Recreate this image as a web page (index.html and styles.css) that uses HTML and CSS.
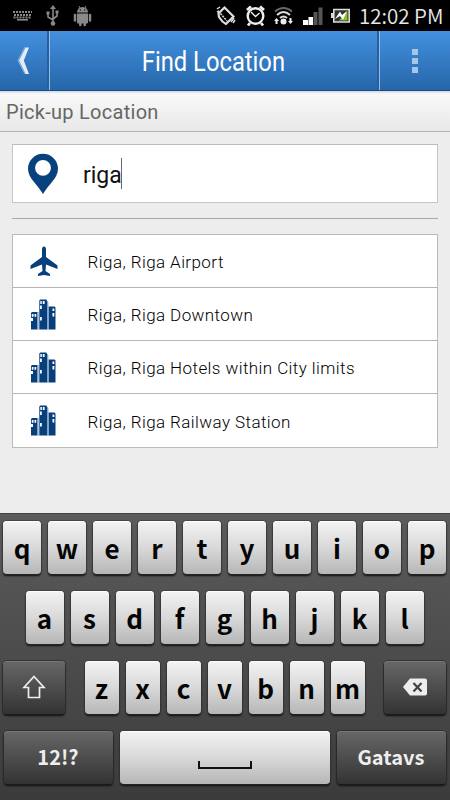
FILE: index.html
```html
<!DOCTYPE html>
<html lang="en">
<head>
<meta charset="utf-8">
<title>Find Location</title>
<link rel="stylesheet" href="styles.css">
</head>
<body>
<svg width="0" height="0" class="defs">
  <symbol id="city" viewBox="0 0 26 31">
    <path fill="#063f7c" d="M1 14l1-1h5.500v17.500H1zM9.300 1.500l1-1h6l1.200 2v28H9.300zM18.500 7.500h6l1 1v22h-7z"/>
    <path fill="#fff" d="M10.300 2h1.500v3h-1.500zM12.800 2h1.800v3h-1.800zM10 6.500h1.800v3.500H10zM10 18h1.800v3.500H10zM1.800 15h1.700v2.700H1.800zM4.500 15h1.700v2.700H4.500zM1 19h2v3H1zM22.500 9.500h1.800V12h-1.800zM22.500 14h1.800v3.500h-1.800z"/>
    <path stroke="#8caac8" stroke-width=".8" d="M8.400 13v18M18 3v28"/>
  </symbol>
</svg>
<div class="status">
  <svg class="status-left" width="96" height="31" viewBox="0 0 96 31">
    <g fill="none" stroke="#898989" stroke-width="2" stroke-dasharray="2 1"><path d="M13 12h19M14 15h17M13.500 17.500h18"/></g>
    <path fill="#898989" d="M17 19h11v1.600H17z"/>
    <g fill="none" stroke="#898989" stroke-width="1.600"><path d="M53 8v15M48 14v3l5 3M57 12v4l-4 3"/></g>
    <path fill="#898989" d="M53 5l3 4h-6zM46.500 11.500h3v3h-3zM55.500 10.500h3v3h-3z"/><circle cx="53" cy="23.500" r="2.300" fill="#898989"/>
    <path fill="#898989" d="M77 12.500a5.500 5.500 0 0 1 11 0zM77 13.500h11v9a1 1 0 0 1-1 1H78a1 1 0 0 1-1-1z"/>
    <path stroke="#898989" stroke-width="2.500" stroke-linecap="round" d="M75 15v5.500M90 15v5.500M80.300 22v3M84.700 22v3"/>
    <path stroke="#898989" d="M79 6l1.500 3M86 6l-1.500 3"/><circle cx="80.300" cy="10" r=".7"/><circle cx="84.700" cy="10" r=".7"/>
  </svg>
  <svg class="status-right" width="145" height="31" viewBox="210 0 145 31">
    <g fill="none" stroke="#ddd">
      <path d="M224.500 7.500l9 9-7.500 7.500q-4-2-7-7l-.5-3.500z" stroke-width="2.200"/>
      <path d="M220.500 13.500l6.500 7.500" stroke-width="1.600" stroke-dasharray="2 1"/>
      <path d="M217 9l3-2M217 12l2-1M231 22l3-4M233 23l2-3" stroke-width="1.500"/>
    </g>
    <g fill="none" stroke="#eee" stroke-width="2.400"><circle cx="255.500" cy="16" r="7.800"/><path d="M251 12l4.500 4.500 4-3.500" stroke-width="1.400"/><path d="M247 10l4-3.500M260 6.500l4 3.500M250 23l-2 2.500M261 23l2 2.500" stroke-width="2.800"/></g>
    <g fill="none" stroke="#ddd" stroke-width="2"><path d="M275 11.500q8.500-7 17 0" stroke="#666"/><path d="M277 15q6.500-6 13 0M280 18q3.500-3 7 0"/></g>
    <circle cx="283.500" cy="21.500" r="3" fill="#eee"/><path fill="#eee" d="M276.500 18l2.500 3h-1.500v3h-2v-3H274zM290.500 24l2.500-3h-1.500v-3h-2v3H288z"/>
    <path fill="#fff" d="M303 20h5v5h-5zM308.500 17h4.500v8h-4.500z"/><path fill="#555" d="M313.500 12h4v13h-4zM318.500 7.500h4V25h-4z"/>
    <path d="M333.800 9.500h15.400v12.500h-15.400z" fill="#333" stroke="#ddd" stroke-width="1.600"/><path fill="#ddd" d="M331 13h2v5h-2z"/><path fill="#83c020" d="M347.500 11v9.500H339z"/><path fill="#fff" d="M335 19l5-7.500 2 3.500 5-4-4 9-3-4z"/>
  </svg>
  <span class="clock">12:02 PM</span>
</div>
<header class="bar">
  <div class="back"><svg width="16" height="32" viewBox="0 0 16 32"><path d="M10.500 2.500H14L8.800 15.500 14 29h-3.500L4 15.500z" fill="#e4edf7"/><path d="M10 2L3 15.500 10 29" fill="none" stroke="#8db4df"/></svg></div>
  <h1><span>Find Location</span></h1>
  <div class="more"><i></i><i></i><i></i></div>
</header>
<div class="section"><span>Pick-up Location</span></div>
<main>
  <div class="field">
    <svg width="32" height="42" viewBox="0 0 32 42"><path fill="#07417e" fill-rule="evenodd" d="M16 .8A15 15 0 0 0 1 15.800C1 25 10 31 16 41c6-10 15-16 15-25.200A15 15 0 0 0 16 .8zm0 6.200a7.900 7.900 0 1 1 0 15.800 7.900 7.900 0 0 1 0-15.800z"/></svg>
    <span class="query">riga</span><span class="caret"></span>
  </div>
  <hr>
  <ul class="list">
    <li><svg width="28" height="31" viewBox="0 0 28 31"><path fill="#063f7c" d="M14 .5c1.500 0 2 1.700 2 3v7.500l11.500 8.500V23L16 18.500l-.5 6.500 4.500 3v2l-6-1-6 1v-2l4.500-3-.5-6.500L.5 23v-3.500L12 11V3.500c0-1.300.5-3 2-3z"/></svg><span>Riga, Riga Airport</span></li>
    <li><svg width="26" height="31"><use href="#city"/></svg><span>Riga, Riga Downtown</span></li>
    <li><svg width="26" height="31"><use href="#city"/></svg><span>Riga, Riga Hotels within City limits</span></li>
    <li><svg width="26" height="31"><use href="#city"/></svg><span>Riga, Riga Railway Station</span></li>
  </ul>
</main>
<div class="keyboard">
  <div class="row"><b>q</b><b>w</b><b>e</b><b>r</b><b>t</b><b>y</b><b>u</b><b>i</b><b>o</b><b>p</b></div>
  <div class="row home"><b>a</b><b>s</b><b>d</b><b>f</b><b>g</b><b>h</b><b>j</b><b>k</b><b>l</b></div>
  <div class="row lower">
    <b class="dark"><svg width="24" height="26" viewBox="0 0 24 26"><path d="M12 2.500L22 13.500h-4.500v10h-11v-10H2z" fill="none" stroke="#eee" stroke-width="1.700"/></svg></b>
    <div class="letters"><b>z</b><b>x</b><b>c</b><b>v</b><b>b</b><b>n</b><b>m</b></div>
    <b class="dark"><svg width="26" height="18" viewBox="0 0 26 18"><path d="M1 9l7-8.500h15q2 0 2 2v13q0 2-2 2H8z" fill="#eee"/><path d="M11.500 5l8 8.500m0-8.500l-8 8.500" stroke="#444" stroke-width="2.200"/></svg></b>
  </div>
  <div class="row bottom"><b class="dark">12!?</b><b class="space"><i></i></b><b class="dark">Gatavs</b></div>
</div>
</body>
</html>
```
FILE: styles.css
```css
* { box-sizing: border-box; }
body { margin: 0; width: 450px; height: 800px; overflow: hidden; background: #ededed; font-family: Roboto, sans-serif; display: flex; flex-direction: column; }
.defs { position: absolute; }
.status { height: 31px; background: #000; display: flex; flex: none; }
.status svg { flex: none; }
.status-right { margin-left: 114px; }
.clock { margin-left: 4px; color: #e8e8e8; font: 350 20.500px/30px "Noto Sans CJK JP", sans-serif; white-space: nowrap; }
.bar { height: 60px; flex: none; display: flex; background: linear-gradient(#4490df, #2566a9); border-bottom: 1px solid #0e519b; color: #fff; }
.back { width: 49px; padding: 14px 0 0 15px; border-right: 2px solid #285f9c; }
.bar h1 { margin: 0; flex: 1; border-left: 1px solid #91bce9; font-size: 27px; font-weight: 450; line-height: 63px; text-align: center; white-space: nowrap; }
.bar h1 span { display: inline-block; transform: translateX(-1px) scaleX(.88); }
.more { width: 71px; border-left: 1px solid #91bce9; box-shadow: -2px 0 #285f9c; padding-top: 18px; display: flex; flex-direction: column; align-items: center; gap: 3px; }
.more i { width: 6px; height: 6px; background: #a5c6e9; }
.section { height: 41px; flex: none; border-bottom: 1px solid #b3b3b3; background: linear-gradient(#d5d5d5, #f9f9f9 3px, #e8e8e8); padding-left: 6px; color: #666; font-size: 20px; line-height: 42px; letter-spacing: .28px; }
main { height: 381px; flex: none; padding: 12px 12.500px 0 12.400px; }
.field { height: 59px; background: #fff; border: 1px solid #c6c6c6; border-top-color: #bbb; display: flex; align-items: center; padding-left: 13.500px; }
.query { margin-left: 24px; padding-top: 4px; font-size: 23px; color: #111; letter-spacing: 0; }
.caret { width: 1px; height: 31px; background: #666; margin-left: -1px; }
hr { border: 0; height: 1px; background: #aaa; margin: 15px 0 15px; }
.list { margin: 0; padding: 0; list-style: none; border: 1px solid #bbb; background: #fff; }
.list li { height: 53px; display: flex; align-items: center; padding-left: 17px; font-size: 17px; font-weight: 350; color: #000; letter-spacing: .42px; border-bottom: 1px solid #b5b5b5; }
.list li:last-child { border-bottom: 0; }
.list li:first-child { padding-left: 16.500px; }
.list svg { flex: none; }
.list span { margin-left: 31.200px; padding-top: 2px; }
.list li:first-child span { margin-left: 29.700px; }
.keyboard { height: 287px; flex: none; border-top: 1px solid #444; background: linear-gradient(#5b5b5b, #4c4c4c 50%, #3b3b3b); padding: 7px 4px 0 3px; display: flex; flex-direction: column; gap: 17px; font-family: "Noto Sans CJK JP", sans-serif; }
.row { height: 53px; display: flex; gap: 7px; justify-content: center; }
.row b { width: 38px; height: 53px; border-radius: 4px; display: flex; align-items: center; justify-content: center; background: linear-gradient(#f3f3f3, #d9d9d9 50%, #b6b6b6); box-shadow: 0 0 0 1px #3338, 0 2px 2px #111, inset 0 1px #fff; color: #050505; font-size: 26px; line-height: 53px; padding-bottom: 1px; }
.letters { display: flex; gap: 7px; }
.letters b { width: 34px; }
.row.lower { justify-content: space-between; }
.row b.dark { width: 62px; background: linear-gradient(#676767, #333); box-shadow: 0 0 0 1px #2228, 0 2px 2px #111, inset 0 1px #777; color: #eee; font-size: 20px; }
.row.bottom b.dark { width: 109px; padding-bottom: 2px; }
.row b.space { width: 210px; }
.space i { width: 54px; height: 8px; border: 2px solid #111; border-top: 0; margin-top: 16px; }
```
